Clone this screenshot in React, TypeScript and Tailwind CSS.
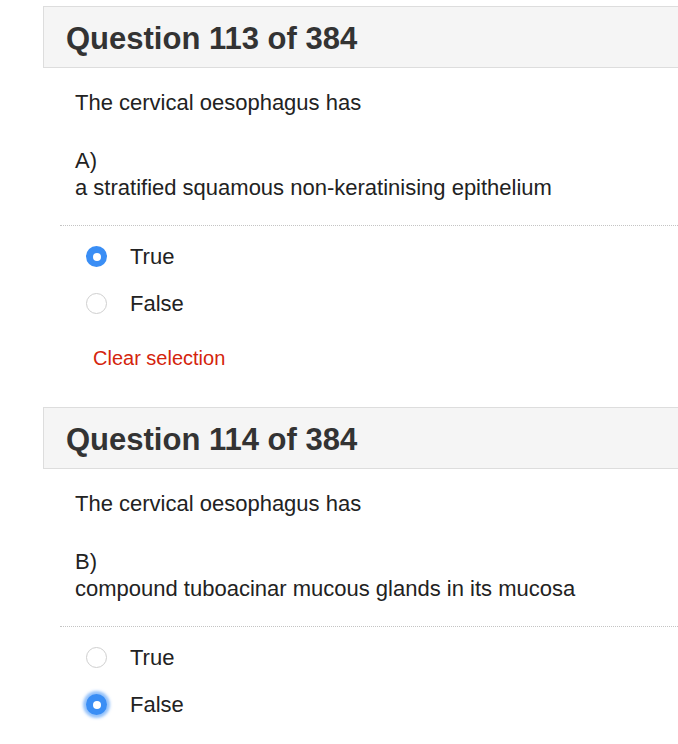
import React, { useState } from 'react'

interface Question {
  number: number
  total: number
  stem: string
  letter: string
  statement: string
}

const questions: Question[] = [
  {
    number: 113,
    total: 384,
    stem: 'The cervical oesophagus has',
    letter: 'A)',
    statement: 'a stratified squamous non-keratinising epithelium',
  },
  {
    number: 114,
    total: 384,
    stem: 'The cervical oesophagus has',
    letter: 'B)',
    statement: 'compound tuboacinar mucous glands in its mucosa',
  },
]

const Radio: React.FC<{ checked: boolean; focused?: boolean }> = ({ checked, focused }) => {
  if (checked) {
    return (
      <span
        className={`flex h-[21px] w-[21px] items-center justify-center rounded-full bg-[#3a8ef5] ${
          focused ? 'shadow-[0_0_3px_3px_rgba(58,142,245,0.55)]' : ''
        }`}
      >
        <span className="h-[8px] w-[8px] rounded-full bg-white" />
      </span>
    )
  }
  return <span className="block h-[21px] w-[21px] rounded-full border-[1.5px] border-[#cfcfcf] bg-white" />
}

const QuestionBlock: React.FC<{ q: Question; initial: 'True' | 'False'; focused?: boolean; showClear?: boolean }> = ({
  q,
  initial,
  focused,
  showClear = true,
}) => {
  const [value, setValue] = useState<string | null>(initial)

  return (
    <section>
      {/* Header */}
      <div className="flex h-[62px] items-center border border-r-0 border-[#dddddd] bg-[#f5f5f5] pl-[22px] pt-[3px]">
        <h2 className="text-[31px] font-bold leading-none text-[#333333]">
          Question {q.number} of {q.total}
        </h2>
      </div>

      {/* Question text */}
      <div className="pl-[32px] pt-[21px] text-[22px] leading-[27px] text-[#222222]">
        <p>{q.stem}</p>
        <p className="mt-[31px]">{q.letter}</p>
        <p>{q.statement}</p>
      </div>

      <div className="ml-[17px] mt-[24px] border-t border-dotted border-[#c4c4c4]" />

      {/* Options */}
      <div className="mt-[7px]">
        {['True', 'False'].map((opt) => (
          <label
            key={opt}
            onClick={() => setValue(opt)}
            className="flex h-[47px] cursor-pointer items-center pl-[43px] text-[22px] text-[#222222]"
          >
            <Radio checked={value === opt} focused={focused && value === opt} />
            <span className="ml-[23px]">{opt}</span>
          </label>
        ))}
      </div>

      {showClear && (
        <button
          onClick={() => setValue(null)}
          className="ml-[50px] mt-[19px] block text-[20px] leading-[24px] text-[#d4240c]"
        >
          Clear selection
        </button>
      )}
    </section>
  )
}

export default function App() {
  return (
    <div className="h-[744px] overflow-hidden bg-white pl-[43px] pt-[6px] font-['Liberation_Sans',Arial,sans-serif]">
      <QuestionBlock q={questions[0]} initial="True" />
      <div className="h-[37px]" />
      <QuestionBlock q={questions[1]} initial="False" focused showClear={false} />
    </div>
  )
}
